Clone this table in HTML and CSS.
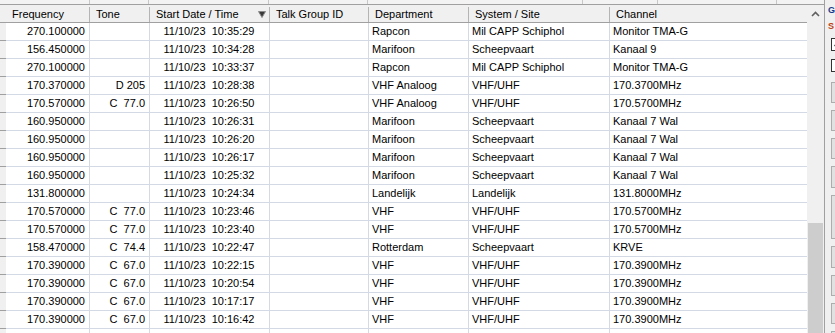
FILE: index.html
```html
<!DOCTYPE html>
<html>
<head>
<meta charset="utf-8">
<link rel="stylesheet" href="styles.css">
</head>
<body>
<div class="window">
  <div class="main">
    <div class="topstrip">
      <span class="ts" style="width:90px"></span><span class="ts" style="width:59px"></span><span class="ts" style="width:120px"></span><span class="ts" style="width:99px"></span><span class="ts" style="width:215px"></span><span class="ts" style="width:75px"></span><span class="ts" style="width:119px"></span>
    </div>
    <div class="content">
      <div class="rowheads">
        <div class="rh-head"></div>
        <div class="rh"></div><div class="rh"></div><div class="rh"></div><div class="rh"></div><div class="rh"></div><div class="rh"></div><div class="rh"></div><div class="rh"></div><div class="rh"></div><div class="rh"></div><div class="rh"></div><div class="rh"></div><div class="rh"></div><div class="rh"></div><div class="rh"></div><div class="rh"></div><div class="rh"></div><div class="rh"></div>
      </div>
      <div class="grid">
        <div class="row head">
          <div class="hc">Frequency</div>
          <div class="hc">Tone</div>
          <div class="hc sorted">Start Date / Time<svg class="sort" width="8" height="7" viewBox="0 0 8 7"><path d="M0.5 0.5 H7.5 L4 6.5 Z" fill="#3a3a3a" stroke="#8a8a8a" stroke-width="1"/></svg></div>
          <div class="hc">Talk Group ID</div>
          <div class="hc">Department</div>
          <div class="hc">System / Site</div>
          <div class="hc last">Channel</div>
        </div>

        <div class="row"><div class="c r">270.100000</div><div class="c r"></div><div class="c m">11/10/23  10:35:29</div><div class="c"></div><div class="c">Rapcon</div><div class="c">Mil CAPP Schiphol</div><div class="c last">Monitor TMA-G</div></div>
        <div class="row"><div class="c r">156.450000</div><div class="c r"></div><div class="c m">11/10/23  10:34:28</div><div class="c"></div><div class="c">Marifoon</div><div class="c">Scheepvaart</div><div class="c last">Kanaal 9</div></div>
        <div class="row"><div class="c r">270.100000</div><div class="c r"></div><div class="c m">11/10/23  10:33:37</div><div class="c"></div><div class="c">Rapcon</div><div class="c">Mil CAPP Schiphol</div><div class="c last">Monitor TMA-G</div></div>
        <div class="row"><div class="c r">170.370000</div><div class="c r">D 205</div><div class="c m">11/10/23  10:28:38</div><div class="c"></div><div class="c">VHF Analoog</div><div class="c">VHF/UHF</div><div class="c last">170.3700MHz</div></div>
        <div class="row"><div class="c r">170.570000</div><div class="c r">C  77.0</div><div class="c m">11/10/23  10:26:50</div><div class="c"></div><div class="c">VHF Analoog</div><div class="c">VHF/UHF</div><div class="c last">170.5700MHz</div></div>
        <div class="row"><div class="c r">160.950000</div><div class="c r"></div><div class="c m">11/10/23  10:26:31</div><div class="c"></div><div class="c">Marifoon</div><div class="c">Scheepvaart</div><div class="c last">Kanaal 7 Wal</div></div>
        <div class="row"><div class="c r">160.950000</div><div class="c r"></div><div class="c m">11/10/23  10:26:20</div><div class="c"></div><div class="c">Marifoon</div><div class="c">Scheepvaart</div><div class="c last">Kanaal 7 Wal</div></div>
        <div class="row"><div class="c r">160.950000</div><div class="c r"></div><div class="c m">11/10/23  10:26:17</div><div class="c"></div><div class="c">Marifoon</div><div class="c">Scheepvaart</div><div class="c last">Kanaal 7 Wal</div></div>
        <div class="row"><div class="c r">160.950000</div><div class="c r"></div><div class="c m">11/10/23  10:25:32</div><div class="c"></div><div class="c">Marifoon</div><div class="c">Scheepvaart</div><div class="c last">Kanaal 7 Wal</div></div>
        <div class="row"><div class="c r">131.800000</div><div class="c r"></div><div class="c m">11/10/23  10:24:34</div><div class="c"></div><div class="c">Landelijk</div><div class="c">Landelijk</div><div class="c last">131.8000MHz</div></div>
        <div class="row"><div class="c r">170.570000</div><div class="c r">C  77.0</div><div class="c m">11/10/23  10:23:46</div><div class="c"></div><div class="c">VHF</div><div class="c">VHF/UHF</div><div class="c last">170.5700MHz</div></div>
        <div class="row"><div class="c r">170.570000</div><div class="c r">C  77.0</div><div class="c m">11/10/23  10:23:40</div><div class="c"></div><div class="c">VHF</div><div class="c">VHF/UHF</div><div class="c last">170.5700MHz</div></div>
        <div class="row"><div class="c r">158.470000</div><div class="c r">C  74.4</div><div class="c m">11/10/23  10:22:47</div><div class="c"></div><div class="c">Rotterdam</div><div class="c">Scheepvaart</div><div class="c last">KRVE</div></div>
        <div class="row"><div class="c r">170.390000</div><div class="c r">C  67.0</div><div class="c m">11/10/23  10:22:15</div><div class="c"></div><div class="c">VHF</div><div class="c">VHF/UHF</div><div class="c last">170.3900MHz</div></div>
        <div class="row"><div class="c r">170.390000</div><div class="c r">C  67.0</div><div class="c m">11/10/23  10:20:54</div><div class="c"></div><div class="c">VHF</div><div class="c">VHF/UHF</div><div class="c last">170.3900MHz</div></div>
        <div class="row"><div class="c r">170.390000</div><div class="c r">C  67.0</div><div class="c m">11/10/23  10:17:17</div><div class="c"></div><div class="c">VHF</div><div class="c">VHF/UHF</div><div class="c last">170.3900MHz</div></div>
        <div class="row"><div class="c r">170.390000</div><div class="c r">C  67.0</div><div class="c m">11/10/23  10:16:42</div><div class="c"></div><div class="c">VHF</div><div class="c">VHF/UHF</div><div class="c last">170.3900MHz</div></div>
        <div class="row"><div class="c r"></div><div class="c r"></div><div class="c m"></div><div class="c"></div><div class="c"></div><div class="c"></div><div class="c last"></div></div>
      </div>
      <div class="scrollbar">
        <div class="sb-up"><svg width="9" height="6" viewBox="0 0 9 6"><path d="M1 5 L4.5 1.5 L8 5" fill="none" stroke="#606060" stroke-width="1.6"/></svg></div>
        <div class="sb-track"></div>
        <div class="sb-thumb"></div>
      </div>
    </div>
  </div>
  <div class="divider"></div>
  <div class="panel">
    <div class="lbl lbl-a">G</div>
    <div class="lbl lbl-b">S</div>
    <div class="chk checked"><svg width="10" height="10" viewBox="0 0 10 10"><path d="M1.5 5 L4 7.5 L8.5 2" fill="none" stroke="#333" stroke-width="1.3"/></svg></div>
    <div class="chk"></div>
    <div class="btn h21"></div>
    <div class="btn h21"></div>
    <div class="btn h21"></div>
    <div class="btn h22"></div>
    <div class="btn h44"></div>
    <div class="btn h22"></div>
    <div class="btn h21"></div>
    <div class="btn h21"></div>
    <div class="btn h21"></div>
  </div>
</div>
</body>
</html>
```

FILE: styles.css
```css
* { box-sizing: border-box; }
html, body {
  margin: 0;
  padding: 0;
  width: 835px;
  height: 333px;
  overflow: hidden;
  background: #f0f0f0;
}
body {
  font-family: "Liberation Sans", Arial, sans-serif;
  font-size: 11px;
  color: #000;
}
.window {
  display: flex;
  height: 333px;
}
.main {
  width: 824px;
  display: flex;
  flex-direction: column;
}
.topstrip {
  height: 5px;
  display: flex;
  background: #f3f3f3;
  border-bottom: 1px solid #a0a0a0;
}
.ts {
  height: 4px;
  border-right: 1px solid #c8c8c8;
  flex: none;
}
.content {
  display: flex;
  flex: 1;
  overflow: hidden;
}
.rowheads {
  width: 6px;
  flex: none;
  background: #f0f0f0;
}
.rh-head {
  height: 18px;
  border-bottom: 1px solid #a0a0a0;
}
.rh {
  height: 18px;
  border-bottom: 1px solid #a0a0a0;
}
.grid {
  width: 801px;
  flex: none;
  background: #fff;
}
.row {
  display: grid;
  grid-template-columns: 84px 60px 120px 99px 100px 141px 197px;
  height: 18px;
}
.row.head {
  background: #f0f0f0;
}
.hc {
  position: relative;
  height: 18px;
  padding: 3px 0 0 6px;
  border-bottom: 1px solid #a0a0a0;
  white-space: nowrap;
}
.hc::after {
  content: "";
  position: absolute;
  right: 0;
  top: 2px;
  bottom: 0;
  width: 1px;
  background: #b4b4b4;
}
.hc.last::after { display: none; }
.hc.sorted .sort {
  position: absolute;
  left: 108px;
  top: 6px;
}
.c {
  height: 18px;
  border-right: 1px solid #d3dae6;
  border-bottom: 1px solid #d3dae6;
  padding: 2px 3px 0 3px;
  white-space: pre;
  overflow: hidden;
  line-height: 13px;
}
.c.last { border-right: none; }
.c.r {
  text-align: right;
  padding-right: 4px;
}
.c.m {
  text-align: center;
  padding-left: 0;
  padding-right: 1px;
}
.scrollbar {
  width: 18px;
  flex: none;
  display: flex;
  flex-direction: column;
  background: #f0f0f0;
  padding-left: 1px;
}
.sb-up {
  height: 17px;
  display: flex;
  align-items: center;
  justify-content: center;
  padding-right: 2px;
}
.sb-track {
  height: 201px;
}
.sb-thumb {
  flex: 1;
  width: 15px;
  background: #cdcdcd;
}
.divider {
  width: 1px;
  flex: none;
  background: #a0a0a0;
}
.panel {
  flex: 1;
  background: #f0f0f0;
  overflow: hidden;
  padding-left: 6px;
  display: flex;
  flex-direction: column;
}
.lbl {
  font-size: 9px;
  height: 13px;
  line-height: 13px;
  margin-left: -3px;
  font-weight: bold;
  white-space: nowrap;
}
.lbl-a { color: #1a3a8a; margin-top: 4px; }
.lbl-b { color: #c04010; margin-top: 3px; }
.chk {
  width: 13px;
  height: 13px;
  border: 1px solid #333;
  background: #fff;
  flex: none;
  display: flex;
  align-items: center;
  justify-content: center;
}
.chk.checked { margin-top: 5px; }
.chk + .chk { margin-top: 8px; }
.btn {
  width: 40px;
  flex: none;
  border: 1px solid #adadad;
  background: #e1e1e1;
  margin-top: 7px;
}
.chk + .btn { margin-top: 10px; }
.h21 { height: 21px; }
.h22 { height: 22px; }
.h44 { height: 44px; }
```
